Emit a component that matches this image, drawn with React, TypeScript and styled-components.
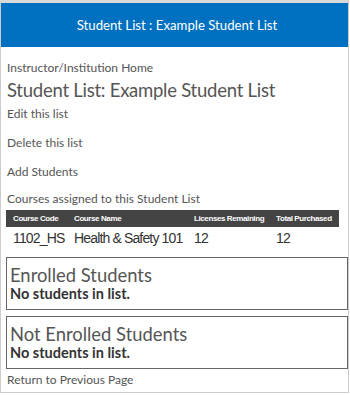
import styled, { createGlobalStyle } from "styled-components";

const GlobalStyle = createGlobalStyle`
  html, body {
    margin: 0;
    padding: 0;
    background: #ffffff;
  }
  body {
    font-family: Lato, "Open Sans", sans-serif;
    color: #555555;
  }
`;

const Frame = styled.div`
  width: 347px;
  height: 389px;
  border: 1px solid #cccccc;
  border-top: 3px solid #d9d9d9;
  display: flex;
  flex-direction: column;
  overflow: hidden;
`;

const Header = styled.div`
  height: 44px;
  flex-shrink: 0;
  background-color: #0070c0;
  color: #ffffff;
  display: flex;
  align-items: center;
  justify-content: center;
  font-size: 13.2px;
  padding-left: 5px;
`;

const Content = styled.div`
  padding: 13px 6px 0 5px;
  display: flex;
  flex-direction: column;
`;

const NavLink = styled.div<{ gap?: number }>`
  font-size: 12px;
  line-height: 16px;
  margin-top: ${(p) => p.gap ?? 0}px;
  padding-left: 1px;
`;

const Title = styled.h1`
  margin: 2px 0 0 0;
  font-size: 18.5px;
  letter-spacing: -0.25px;
  font-weight: 400;
  line-height: 24px;
  padding-left: 1px;
`;

const SmallCaption = styled.div`
  font-size: 12px;
  line-height: 14px;
  margin-top: 12px;
  padding-left: 1px;
`;

const Table = styled.table`
  width: 333px;
  table-layout: fixed;
  border-collapse: collapse;
  margin-top: 4px;
  font-family: "Liberation Sans", Arial, sans-serif;
`;

const HeadCell = styled.th<{ w?: number }>`
  width: ${(p) => (p.w ? `${p.w}px` : "auto")};
  background-color: #444444;
  color: #ffffff;
  font-size: 8px;
  letter-spacing: -0.4px;
  font-weight: 700;
  text-align: left;
  height: 17px;
  padding: 0 0 0 7px;
  white-space: nowrap;
  overflow: hidden;
`;

const Cell = styled.td`
  font-size: 14px;
  letter-spacing: -0.85px;
  color: #333333;
  height: 22px;
  padding: 0 0 0 7px;
  white-space: nowrap;
`;

const Box = styled.div<{ gap: number }>`
  width: 334px;
  border: 1px solid #666666;
  margin-top: ${(p) => p.gap}px;
  padding: 7px 3px 7px 3px;
`;

const BoxTitle = styled.div`
  font-size: 18.4px;
  line-height: 20px;
`;

const BoxNote = styled.div`
  font-size: 14.5px;
  font-weight: 700;
  color: #333333;
  line-height: 17px;
`;

const courses = [
  { code: "1102_HS", name: "Health & Safety 101", remaining: 12, total: 12 },
];

export default function App() {
  return (
    <>
      <GlobalStyle />
      <Frame>
        <Header>Student List : Example Student List</Header>
        <Content>
          <NavLink>Instructor/Institution Home</NavLink>
          <Title>Student List: Example Student List</Title>
          <NavLink gap={4}>Edit this list</NavLink>
          <NavLink gap={13}>Delete this list</NavLink>
          <NavLink gap={13}>Add Students</NavLink>
          <SmallCaption>Courses assigned to this Student List</SmallCaption>
          <Table>
            <thead>
              <tr>
                <HeadCell w={54}>Course Code</HeadCell>
                <HeadCell w={113}>Course Name</HeadCell>
                <HeadCell w={75}>Licenses Remaining</HeadCell>
                <HeadCell>Total Purchased</HeadCell>
              </tr>
            </thead>
            <tbody>
              {courses.map((c) => (
                <tr key={c.code}>
                  <Cell>{c.code}</Cell>
                  <Cell>{c.name}</Cell>
                  <Cell>{c.remaining}</Cell>
                  <Cell>{c.total}</Cell>
                </tr>
              ))}
            </tbody>
          </Table>
          <Box gap={8}>
            <BoxTitle>Enrolled Students</BoxTitle>
            <BoxNote>No students in list.</BoxNote>
          </Box>
          <Box gap={6}>
            <BoxTitle>Not Enrolled Students</BoxTitle>
            <BoxNote>No students in list.</BoxNote>
          </Box>
          <NavLink gap={3}>Return to Previous Page</NavLink>
        </Content>
      </Frame>
    </>
  );
}
